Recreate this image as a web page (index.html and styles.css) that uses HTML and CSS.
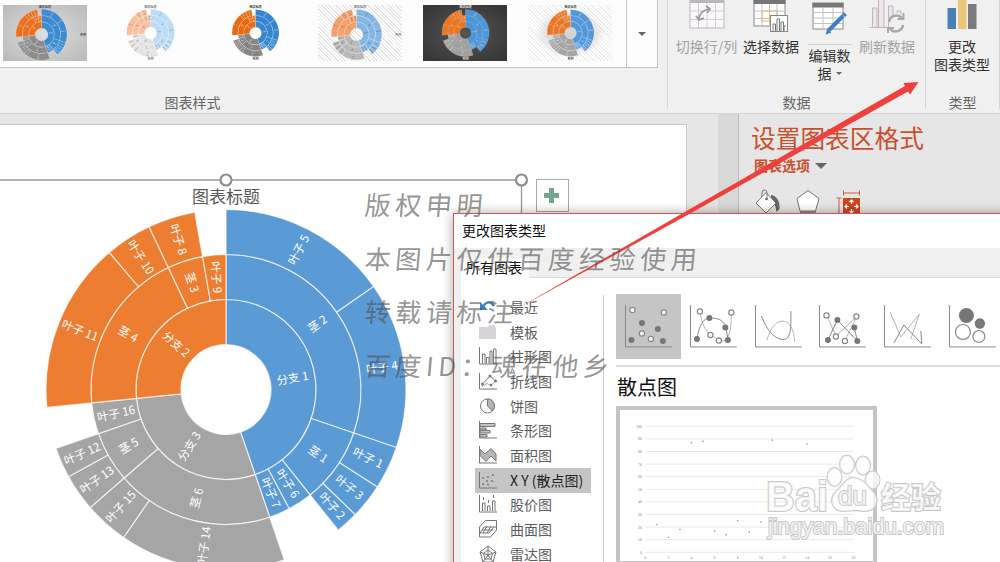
FILE: index.html
```
<!DOCTYPE html>
<html lang="zh-CN">
<head>
  <meta charset="UTF-8" />
  <meta name="viewport" content="width=device-width, initial-scale=1.0"/>
  <title>更改图表类型</title>
  <link rel="stylesheet" href="styles.css">
</head>
<body>
  <div class="ribbon">
    <div class="group styles-group">
      <div class="gallery">
        <div class="thumbs" id="thumbs"></div>
        <div class="more"><span class="caret"></span></div>
      </div>
      <div class="group-name">图表样式</div>
    </div>

    <div class="group data-group">
      <div class="buttons">
        <div class="btn disabled switch">
          <svg width="36" height="34" viewBox="0 0 36 34">
            <rect x="1" y="-4" width="34" height="32" fill="#faf8fa" stroke="#bdb6bd"/>
            <path d="M1 -1H35V3H1Z" fill="#bdb6bd"/>
            <path d="M1 11H35M1 19.5H35M9.5 3V28M18 3V28M26.5 3V28" stroke="#d3ccd3"/>
            <path d="M10 20C10 13 14 10 20 9M17 6l4 3-3 4M7 16l3 4 5-2" fill="none" stroke="#999" stroke-width="1.6"/>
          </svg>
          <span>切换行/列</span>
        </div>
        <div class="btn select">
          <svg width="36" height="34" viewBox="0 0 36 34">
            <rect x="1" y="-3" width="31" height="29" fill="#fff" stroke="#888"/>
            <path d="M0.500 0H32.500V4H0.500Z" fill="#777"/>
            <path d="M1 11H32M1 18.500H32M9 4V26M16.500 4V26M24 4V26" stroke="#c2c2c2"/>
            <path d="M9 11H24V21H9ZM16.500 11V21M9 18.500H24" fill="none" stroke="#e2b97a"/>
            <rect x="17.500" y="15.500" width="17" height="16" fill="#fff" stroke="#888"/>
            <path d="M20 31v-7h2.500v7M24 31V19h2.500v12M28 31v-9h2.500v9M31 31v-5h2" fill="none" stroke="#777"/>
          </svg>
          <span>选择数据</span>
        </div>
        <div class="btn edit">
          <svg width="36" height="38" viewBox="0 0 36 38">
            <rect x="1" y="3" width="30" height="26" fill="#fff" stroke="#888"/>
            <path d="M0.500 3H31.500V7.500H0.500Z" fill="#777"/>
            <path d="M1 12.500H31M1 18H31M1 23.500H31M11 7V29M21 7V29" stroke="#c2c2c2"/>
            <path d="M17 30L31 16" stroke="#3f7fbd" stroke-width="4"/>
            <path d="M31.500 15.500l1.800-1.800" stroke="#3f7fbd" stroke-width="4.500"/>
            <path d="M13.500 34.500l2-6 4 4z" fill="#3f7fbd"/>
          </svg>
          <span class="split"></span>
          <span>编辑数<br>据<i class="mini"></i></span>
        </div>
        <div class="btn disabled refresh">
          <svg width="36" height="34" viewBox="0 0 36 34">
            <path d="M0 27.500H20" stroke="#bdb6bd"/>
            <path d="M3.500 27V8H8v19M9.500 27V-4H15v31M19.500 27V6H24v11M28 13V11h4v3" fill="#ece6ec" stroke="#bdb6bd"/>
            <g fill="none" stroke="#aaa6aa" stroke-width="2.500">
              <path d="M20 22a7.500 7.500 0 0 1 13-4M34 25a7.500 7.500 0 0 1-13 4"/>
              <path d="M34.500 13v6h-6M19 33v-5h6" stroke-width="2"/>
            </g>
          </svg>
          <span>刷新数据</span>
        </div>
      </div>
      <div class="group-name">数据</div>
    </div>

    <div class="group type-group">
      <div class="buttons">
        <div class="btn change">
          <svg width="36" height="34" viewBox="0 0 36 34">
            <rect x="3.500" y="8" width="8.500" height="21" fill="#4a80b4"/>
            <rect x="14" y="-4" width="8.500" height="33" fill="#ecc679"/>
            <rect x="24" y="4" width="8.500" height="25" fill="#7b7b7b"/>
          </svg>
          <span>更改<br>图表类型</span>
        </div>
      </div>
      <div class="group-name">类型</div>
    </div>
  </div>

  <div class="workspace">
    <div class="slide">
      <svg class="chart" width="686" height="437" viewBox="0 125 686 437">
        <path d="M0 180H521.500V562" fill="none" stroke="#9a9a9a" stroke-width="1.300"/>
        <text class="chart-title" x="226" y="203" text-anchor="middle">图表标题</text>
        <g id="sunburst" transform="translate(226 389.500)"></g>
        <g fill="#fff" stroke="#8e8e8e" stroke-width="2.200">
          <circle cx="226" cy="180" r="5.500"/>
          <circle cx="521.500" cy="180" r="5.500"/>
        </g>
        <rect x="536.500" y="179.500" width="32" height="32" fill="#fff" stroke="#a9a9a9"/>
        <path d="M549 188h5v5h5v5h-5v5h-5v-5h-5v-5h5z" fill="#74a590"/>
      </svg>
    </div>
    <div class="scrollbar"></div>
    <div class="pane">
      <h2>设置图表区格式</h2>
      <div class="pane-options">图表选项 <span class="caret"></span></div>
      <div class="pane-icons">
        <svg width="26" height="26" viewBox="0 0 26 26">
          <path d="M16 6c6 1 9 6 8.500 14l-3 3c-1-6-2-10-5.500-13z" fill="#666"/>
          <path d="M1 14L11 3.500 21 14 11 24z" fill="#fff" stroke="#777"/>
          <path d="M7 8V3.500a2.500 2.500 0 0 1 5 0V10" fill="none" stroke="#777"/>
          <circle cx="11.500" cy="10" r="1.300" fill="#666"/>
        </svg>
        <svg width="26" height="26" viewBox="0 0 26 26">
          <path d="M13 1.500L24 9.500 20.500 22H5L2 9.500z" fill="#fff" stroke="#777"/>
          <path d="M5 22h16v4H5z" fill="#888"/>
        </svg>
        <svg width="26" height="26" viewBox="0 0 26 26">
          <rect x="8" y="9" width="17" height="17" fill="#cf4520"/>
          <path d="M8.500 1.500v5M24.500 1.500v5M8.500 4h16M1.500 9h5M4 9v17" fill="none" stroke="#cf5a3c"/>
          <path d="M16.500 11v4M14.500 13l2-2 2 2M16.500 24v-4M14.500 22l2 2 2-2M10 17.500h4M12 15.500l-2 2 2 2M23 17.500h-4M21 15.500l2 2-2 2" fill="none" stroke="#fff" stroke-width="1.200"/>
        </svg>
      </div>
    </div>
  </div>

  <div class="dialog">
    <div class="dialog-title">更改图表类型</div>
    <div class="tabs"><div class="tab">所有图表</div></div>
    <div class="dialog-body">
      <ul class="kinds">
        <li><svg width="18" height="18" viewBox="0 0 18 18"><path d="M4 9C7 3 12 3 15 8" fill="none" stroke="#3f7fb5" stroke-width="2.500"/><path d="M1 4v8h8z" fill="#3f7fb5"/></svg>最近</li>
        <li><svg width="18" height="18" viewBox="0 0 18 18"><path d="M0 4h9l1.500-2H16v2h1v12H0z" fill="#d9d4d9"/></svg>模板</li>
        <li><svg width="18" height="18" viewBox="0 0 18 18"><path class="ln" d="M.5 0v17H18M3.500 16.500V7h2.500v9.500M7.500 16.500v-6H10v6M11 16.500V4h2v12.500M14.500 16.500V2H17v14.500"/></svg>柱形图</li>
        <li><svg width="18" height="18" viewBox="0 0 18 18"><path class="ln" d="M.5 1v16H18M3.500 12L11 4l5.500 5"/><path class="ln" d="M3 14.500l5-3 4 2.500 4-5" stroke-dasharray="1.500 1"/><g fill="#777"><circle cx="3.500" cy="12" r="1.500"/><circle cx="11" cy="4" r="1.500"/><circle cx="16.500" cy="9" r="1.500"/><circle cx="12" cy="13" r="1.300"/></g></svg>折线图</li>
        <li><svg width="18" height="18" viewBox="0 0 18 18"><circle class="ln" cx="8.500" cy="9" r="7"/><path d="M8.500 9V2A7 7 0 0 1 13.300 14z" fill="#b5b5b5" stroke="#777"/></svg>饼图</li>
        <li><svg width="18" height="18" viewBox="0 0 18 18"><path class="ln" d="M.5 0v17H18"/><path d="M1 2.500h15v3H1zM1 7h6v2H1zM1 9.500h10v2.500H1zM1 13.500h7V16H1z" fill="#c4c4c4" stroke="#777"/></svg>条形图</li>
        <li><svg width="18" height="18" viewBox="0 0 18 18"><path d="M1 3l5 5 6-5.500 5 5.500v7l-5-5-5 5.500-6-6z" fill="#b5b5b5" stroke="#777"/><path class="ln" d="M.5 0v17H18"/></svg>面积图</li>
        <li class="selected"><svg width="18" height="18" viewBox="0 0 18 18"><path class="ln" d="M.5 1v16H18"/><g fill="#777"><circle cx="4" cy="7" r="1"/><circle cx="9" cy="6" r="1"/><circle cx="14" cy="4" r="1"/><circle cx="8" cy="10" r="1"/><circle cx="13" cy="10" r="1"/><circle cx="4" cy="13" r="1"/><circle cx="9" cy="13.500" r="1"/></g></svg>X Y (散点图)</li>
        <li><svg width="18" height="18" viewBox="0 0 18 18"><path class="ln" d="M.5 0v17H18M3.500 16V8H6v8M8.500 16v-5H11v5M13.500 16V6H16v10M4.500 5V2M9.500 8V5M14.500 3V0" /></svg>股价图</li>
        <li><svg width="18" height="18" viewBox="0 0 18 18"><path class="ln" d="M.5 7L6.500.5h11V10l-6 7H.5zM1 13l4-6h12M4 13l4-7M8 13l4-7M3 10h11M1 13h9l5-6"/></svg>曲面图</li>
        <li><svg width="18" height="18" viewBox="0 0 18 18"><path class="ln" d="M9 1l8 6-3 10H4L1 7zM9 5l4.500 3.500L12 14H6L4.500 8.500zM9 1v9M17 7l-8 3M14 17L9 10M4 17l5-7M1 7l8 3"/></svg>雷达图</li>
      </ul>

      <div class="detail">
        <div class="subtypes">
          <svg class="sub active" viewBox="0 0 65 65"><path class="ax" d="M9.500 11V53H56"/><g class="dk"><circle cx="26" cy="29" r="3"/><circle cx="42" cy="35" r="3"/><circle cx="15.500" cy="46" r="3"/><circle cx="47" cy="47" r="3"/></g><g class="lt"><circle cx="16.500" cy="16" r="2.600"/><circle cx="48" cy="18.500" r="2.600"/><circle cx="26" cy="39.500" r="2.600"/><circle cx="35" cy="45" r="2.600"/></g></svg>
          <svg class="sub" viewBox="0 0 65 65"><path class="ax" d="M9.500 11V53H56"/><path class="l2" d="M19 18C21 29 24 37 30 41S38 47 43 47C51 43 50 29 50.500 18"/><path class="l1" d="M16 45C18 32 22 24 29 24S42 25 45 33L47 45"/><g class="dk"><circle cx="16" cy="45" r="3"/><circle cx="28.500" cy="24" r="3"/><circle cx="44.500" cy="33.500" r="3"/><circle cx="47" cy="46" r="3"/></g><g class="lt"><circle cx="19" cy="17.500" r="2.600"/><circle cx="50.500" cy="18.500" r="2.600"/><circle cx="29.500" cy="41" r="2.600"/><circle cx="38" cy="46.500" r="2.600"/></g></svg>
          <svg class="sub" viewBox="0 0 65 65"><path class="ax" d="M9.500 11V53H56"/><path class="l2" d="M21 46C25 33 30 27 37 27S48 36 49 48"/><path class="l1" d="M15.500 22C21 36 28 45 37 45.500S45 31 45 17"/></svg>
          <svg class="sub" viewBox="0 0 65 65"><path class="ax" d="M9.500 11V53H56"/><path class="l2" d="M16.500 21L26 42 46.500 23 35 47"/><path class="l1" d="M18 46L27.500 26 47.500 47 44.500 34"/><g class="dk"><circle cx="18" cy="46" r="3"/><circle cx="27.500" cy="26" r="3"/><circle cx="44.500" cy="33.500" r="3"/><circle cx="47.500" cy="47" r="3"/></g><g class="lt"><circle cx="16.500" cy="21.500" r="2.600"/><circle cx="46.500" cy="22.500" r="2.600"/><circle cx="26" cy="42.500" r="2.600"/><circle cx="35" cy="47" r="2.600"/></g></svg>
          <svg class="sub" viewBox="0 0 65 65"><path class="ax" d="M9.500 11V53H56"/><path class="l2" d="M15 18L26 43 44.500 20 36 45"/><path class="l1" d="M19 49L29 31 47 50 46 37"/></svg>
          <svg class="sub" viewBox="0 0 65 65"><path class="ax" d="M9.500 11V53H56"/><g class="dk"><circle cx="26.500" cy="21.500" r="7.500"/><circle cx="40" cy="29.500" r="5.200"/></g><g class="lt"><circle cx="23" cy="38" r="7.500"/><circle cx="39" cy="42.500" r="6"/></g></svg>
        </div>
        <h3>散点图</h3>
        <div class="preview">
          <svg id="scatter" width="253" height="152" viewBox="620.500 410 253 152"></svg>
        </div>
      </div>
    </div>
  </div>

  <svg class="arrow" width="1000" height="562" viewBox="0 0 1000 562">
    <path d="M514 310.500L690 209 905 86 903.500 83 918.500 82 910 94.500 908 91.500 692 212.500z" fill="#ee403c"/>
  </svg>

  <div class="notice">
    <p>版权申明</p>
    <p>本图片仅供百度经验使用</p>
    <p>转载请标注</p>
    <p>百度ID：魂在他乡</p>
  </div>

  <svg class="baidu" width="190" height="95" viewBox="760 450 190 95">
    <g>
      <text class="logo" x="766" y="511" textLength="62" lengthAdjust="spacingAndGlyphs">Bai</text>
      <ellipse cx="834.500" cy="477" rx="7" ry="9"/>
      <ellipse cx="847" cy="464.500" rx="7" ry="9"/>
      <ellipse cx="863" cy="465.500" rx="7" ry="9"/>
      <ellipse cx="872.500" cy="480" rx="7" ry="8.500"/>
      <path d="M853 478c-8 0-11 9-16 13-8 6-6 20 6 20 7 0 14-2 20 0 13 1 17-11 10-19-6-6-10-14-20-14z"/>
      <text class="du" x="838" y="505">du</text>
      <text class="jy" x="881" y="508">经验</text>
      <text class="url" x="768" y="534" textLength="176">jingyan.baidu.com</text>
    </g>
  </svg>

  <script>
    const BLUE = 0, ORANGE = 1, GRAY = 2;

    // [label, ring, start angle, end angle, series]
    const slices = [
      ['分支 1', 0, 0, 161.1, BLUE],
      ['茎 2', 1, 0, 108.8, BLUE],
      ['叶子 5', 2, 0, 55.1, BLUE],
      ['叶子 4', 2, 55.1, 108.8, BLUE],
      ['茎 1', 1, 108.8, 141.4, BLUE],
      ['叶子 1', 2, 108.8, 122.8, BLUE],
      ['叶子 3', 2, 122.8, 134.1, BLUE],
      ['叶子 2', 2, 134.1, 141.4, BLUE],
      ['叶子 6', 1, 141.4, 152.1, BLUE],
      ['叶子 7', 1, 152.1, 161.1, BLUE],
      ['分支 3', 0, 161.1, 264.3, GRAY],
      ['茎 6', 1, 161.1, 229, GRAY],
      ['叶子 14', 2, 161.1, 214.7, GRAY],
      ['叶子 15', 2, 214.7, 229, GRAY],
      ['茎 5', 1, 229, 250.9, GRAY],
      ['叶子 13', 2, 229, 241, GRAY],
      ['叶子 12', 2, 241, 250.9, GRAY],
      ['叶子 16', 1, 250.9, 264.3, GRAY],
      ['分支 2', 0, 264.3, 360, ORANGE],
      ['茎 4', 1, 264.3, 334.7, ORANGE],
      ['叶子 11', 2, 264.3, 319.6, ORANGE],
      ['叶子 10', 2, 319.6, 334.7, ORANGE],
      ['茎 3', 1, 334.7, 350, ORANGE],
      ['叶子 8', 2, 334.7, 350, ORANGE],
      ['叶子 9', 1, 350, 360, ORANGE]
    ];

    function point(r, deg) {
      const a = deg * Math.PI / 180;
      return (r * Math.sin(a)).toFixed(2) + ' ' + (-r * Math.cos(a)).toFixed(2);
    }

    function sunburst(colors, textColor) {
      let out = '';
      slices.forEach(([label, ring, a0, a1, series]) => {
        const r0 = 45 * (ring + 1), r1 = r0 + 45;
        const big = a1 - a0 > 180 ? 1 : 0;
        const d = `M${point(r0, a0)}L${point(r1, a0)}A${r1} ${r1} 0 ${big} 1 ${point(r1, a1)}L${point(r0, a1)}A${r0} ${r0} 0 ${big} 0 ${point(r0, a0)}Z`;
        out += `<path class="slice" d="${d}" fill="${colors[series]}"/>`;
      });
      slices.forEach(([label, ring, a0, a1]) => {
        const mid = (a0 + a1) / 2;
        const turn = mid > 180 ? mid - 270 : mid - 90;
        out += `<text class="slice-label" fill="${textColor}" transform="translate(${point(45 * ring + 67.5, mid)}) rotate(${turn})" dy="4">${label}</text>`;
      });
      return out;
    }

    document.getElementById('sunburst').innerHTML = sunburst(['#5b9bd5', '#ed7d31', '#a5a5a5'], '#fff');

    // chart style gallery: centre, radius and colours of each preview
    const styles = [
      { cls: 'silver', x: 38.5, y: 29.5, r: 25.5, colors: ['#3d8bd0', '#e8701f', '#8c8c8c'], text: '#fff', title: '#444', side: true },
      { cls: 'plain', x: 42.5, y: 28, r: 24, colors: ['#bcdcf8', '#f9c0a0', '#e4e4e4'], text: '#555', title: '#777' },
      { cls: 'plain', x: 42.5, y: 28, r: 23.5, colors: ['#3686cf', '#e8690f', '#858585'], text: '#fff', title: '#333' },
      { cls: 'hatch', x: 38.5, y: 29.5, r: 25.3, colors: ['#86b6e3', '#f3a06c', '#b9b9b9'], text: '#444', title: '#777', side: true },
      { cls: 'dark', x: 42.5, y: 28, r: 23.5, colors: ['#4a94d8', '#ee7420', '#a0a0a0'], text: '#fff', title: '#eee' },
      { cls: 'hatch soft', x: 42.5, y: 28, r: 23.5, colors: ['#5298da', '#ea7629', '#a5a5a5'], text: '#fff', title: '#444' }
    ];

    document.getElementById('thumbs').innerHTML = styles.map(s => `
      <svg class="thumb ${s.cls}" width="84" height="56" viewBox="0 0 84 56">
        <text class="thumb-title" x="${s.side ? 42 : s.x}" y="3.2" fill="${s.title}">图表标题</text>
        <g transform="translate(${s.x} ${s.y}) scale(${s.r / 180})">${sunburst(s.colors, s.text)}</g>
        <text class="thumb-title" x="${s.side ? 80 : s.x}" y="${s.side ? 30.5 : 54.5}" fill="${s.title}">系列</text>
      </svg>`).join('');

    // scatter preview
    const points = [[1, 22], [2, 12], [3, 18], [4, 87], [5, 88], [6, 17], [7, 14], [8, 25], [9, 16], [10, 24], [11, 89], [14, 86], [15, 23]];
    const px = v => 645.8 + v * 11.55;
    const py = v => 552.3 - v * 1.26;
    let plot = '';
    for (let v = 0; v <= 100; v += 10) {
      plot += `<path d="M646 ${py(v)}H854" stroke="#e9e9e9"/><text x="642.5" y="${py(v) + 1.5}" text-anchor="end">${v}</text>`;
    }
    for (let v = 0; v <= 18; v += 2) {
      plot += `<text x="${px(v)}" y="558.7" text-anchor="middle">${v}</text>`;
    }
    points.forEach(([x, y]) => {
      plot += `<circle cx="${px(x)}" cy="${py(y)}" r="0.8" fill="#7d9db8"/>`;
    });
    document.getElementById('scatter').innerHTML = plot + '<path d="M620 561.500H874" stroke="#c4c4c4"/>';
  </script>
</body>
</html>
```

FILE: styles.css
```
* {
  box-sizing: border-box;
}

html {
  overflow: hidden;
}

body {
  margin: 0;
  width: 1000px;
  height: 562px;
  overflow: hidden;
  position: relative;
  font-family: "Noto Sans CJK SC", sans-serif;
  font-size: 14px;
  color: #444;
  background-color: #e6e6e6;
}

h2, h3, p, ul {
  margin: 0;
  padding: 0;
  font-weight: normal;
}

svg {
  display: block;
  flex: none;
}

/* ribbon */
.ribbon {
  display: flex;
  height: 114px;
  background-color: #f0f0f0;
  border-bottom: 1px solid #d5d5d5;
}

.group {
  display: flex;
  flex-direction: column;
  justify-content: space-between;
  height: 109px;
  padding-bottom: 1px;
}

.group-name {
  text-align: center;
  line-height: 12px;
  height: 12px;
  color: #666;
}

.styles-group {
  width: 667px;
}

.styles-group .group-name {
  width: 385px;
}

.gallery {
  display: flex;
  width: 658px;
  height: 68px;
  background-color: #fdfdfd;
  border-bottom: 1px solid #bfc3c3;
  border-right: 1px solid #c6c6c6;
}

.thumbs {
  display: flex;
  gap: 21px;
  width: 626px;
  padding: 5px 0 0 2.500px;
}

.more {
  flex: 1;
  border-left: 1px solid #c6c6c6;
  display: flex;
  align-items: center;
  justify-content: center;
}

.caret {
  display: inline-block;
  border: 4px solid transparent;
  border-top: 4px solid #666;
  border-bottom: 0;
}

.silver {
  background: radial-gradient(#dedede, #b9b9b9);
}

.hatch {
  background: repeating-linear-gradient(45deg, #fff 0 1.500px, #e4e4e4 1.500px 2.500px);
}

.soft {
  background: radial-gradient(rgba(205, 205, 205, 0.8) 30%, rgba(255, 255, 255, 0.2) 60%), repeating-linear-gradient(45deg, #fff 0 1.500px, #e8e8e8 1.500px 2.500px);
}

.dark {
  background: radial-gradient(#555, #333);
}

.thumb-title {
  font-size: 3px;
  font-weight: bold;
  text-anchor: middle;
}

.data-group {
  width: 258px;
  border-left: 1px solid #d6d6d6;
}

.type-group {
  width: 75px;
  border-left: 1px solid #d6d6d6;
  border-right: 1px solid #d6d6d6;
}

.buttons {
  display: flex;
  padding-left: 7px;
}

.btn {
  display: flex;
  flex-direction: column;
  align-items: center;
  line-height: 18px;
  text-align: center;
  white-space: nowrap;
  color: #333;
}

.btn svg {
  margin-bottom: 3px;
}

.disabled {
  color: #a3a3a3;
}

.switch {
  width: 63px;
}

.select {
  width: 66px;
}

.edit {
  width: 51px;
}

.refresh {
  width: 64px;
}

.change {
  width: 58px;
}

.edit svg {
  margin-bottom: 0;
}

.split {
  width: 44px;
  height: 1px;
  margin: 6px 0 1px;
  background-color: #cfcfcf;
}

.mini {
  display: inline-block;
  margin: 0 0 4px 4px;
  border: 3px solid transparent;
  border-top-color: #666;
  border-bottom: 0;
}

/* slide area */
.workspace {
  display: flex;
  height: 448px;
}

.slide {
  width: 687px;
  margin-top: 10px;
  background-color: #fff;
  border: 1px solid #c8c8c8;
  border-left: 0;
  border-bottom: 0;
  overflow: hidden;
}

.chart-title {
  font-size: 17px;
  fill: #595959;
}

.slice {
  stroke: #fff;
  stroke-opacity: 0.7;
  stroke-width: 1.200;
}

.thumb .slice {
  stroke-width: 2;
}

.slice-label {
  font-size: 11.500px;
  text-anchor: middle;
}

.scrollbar {
  width: 20px;
  margin-left: 31px;
  background-color: #d9d9d9;
}

.pane {
  flex: 1;
  border-left: 1px solid #bdbdbd;
  padding: 6px 0 0 12px;
}

.pane h2 {
  font-size: 24.700px;
  line-height: 34px;
  white-space: nowrap;
  color: #c8502f;
}

.pane-options {
  padding-left: 3px;
  font-weight: bold;
  line-height: 23px;
  color: #c8502f;
}

.pane-options .caret {
  margin: 0 0 2px 2px;
  border-width: 6px;
  border-bottom: 0;
}

.pane-icons {
  display: flex;
  gap: 14px;
  padding: 12px 0 0 4px;
}

/* dialog window */
.dialog {
  position: absolute;
  left: 453px;
  top: 213px;
  width: 570px;
  height: 380px;
  background-color: #f0f0f0;
  border: 1px solid #cd5854;
  box-shadow: 0 0 11px rgba(0, 0, 0, 0.35);
}

.dialog-title {
  height: 34px;
  padding-left: 8px;
  line-height: 33px;
  color: #111;
  background-color: #fff;
}

.tabs {
  height: 30px;
  margin-left: 7px;
  padding-top: 10px;
  border-bottom: 1px solid #dcdcdc;
}

.tab {
  width: 68px;
  height: 20px;
  padding-left: 5px;
  line-height: 18px;
  color: #111;
  background-color: #fff;
}

.dialog-body {
  display: flex;
  height: 320px;
  margin-left: 7px;
  padding-top: 17px;
  background-color: #fff;
}

.kinds {
  width: 143px;
  padding-left: 14px;
  border-right: 1px solid #c9c9c9;
  list-style: none;
}

.kinds li {
  display: flex;
  align-items: center;
  gap: 13px;
  width: 116px;
  height: 24.700px;
  padding: 0 0 1px 4px;
  white-space: nowrap;
  color: #5c5c5c;
}

.kinds .selected {
  background-color: #c5c5c5;
  color: #222;
}

.ln {
  fill: none;
  stroke: #777;
}

.detail {
  padding-left: 12px;
}

.subtypes {
  display: flex;
  width: 400px;
  height: 73px;
  margin-top: -1px;
  border-bottom: 2px solid #e0e0e0;
}

.sub {
  width: 64.800px;
  height: 65px;
}

.active {
  background-color: #c5c5c5;
}

.ax, .l1, .l2 {
  fill: none;
  stroke: #888;
}

.l2 {
  stroke: #b5b5b5;
}

.dk {
  fill: #777;
}

.lt {
  fill: #fff;
  stroke: #888;
  stroke-width: 1.200;
}

.detail h3 {
  padding-left: 1px;
  font-size: 20px;
  line-height: 39px;
  color: #111;
}

.preview {
  width: 261px;
  height: 180px;
  border: 4px solid #c4c4c4;
}

.preview text {
  font-family: "Liberation Serif", serif;
  font-size: 4px;
  fill: #888;
}

/* overlays */
.arrow {
  position: absolute;
  left: 0;
  top: 0;
}

.notice {
  position: absolute;
  left: 365px;
  top: 177px;
  font-size: 26px;
  letter-spacing: 4.600px;
  line-height: 53.500px;
  white-space: nowrap;
  color: rgba(80, 80, 80, 0.62);
}

.notice p {
  transform: skewX(-5deg);
}

.baidu {
  position: absolute;
  left: 760px;
  top: 450px;
}

.baidu g {
  fill: rgba(255, 255, 255, 0.75);
  stroke: #c9c9c9;
  stroke-width: 2;
  paint-order: stroke;
}

.baidu text {
  font-family: "Liberation Sans", "Noto Sans CJK SC", sans-serif;
}

.baidu .logo {
  font-size: 42px;
  font-weight: bold;
}

.baidu .du {
  font-size: 26px;
}

.baidu .jy {
  font-size: 30px;
  font-weight: bold;
}

.baidu .url {
  font-size: 22px;
}
```
